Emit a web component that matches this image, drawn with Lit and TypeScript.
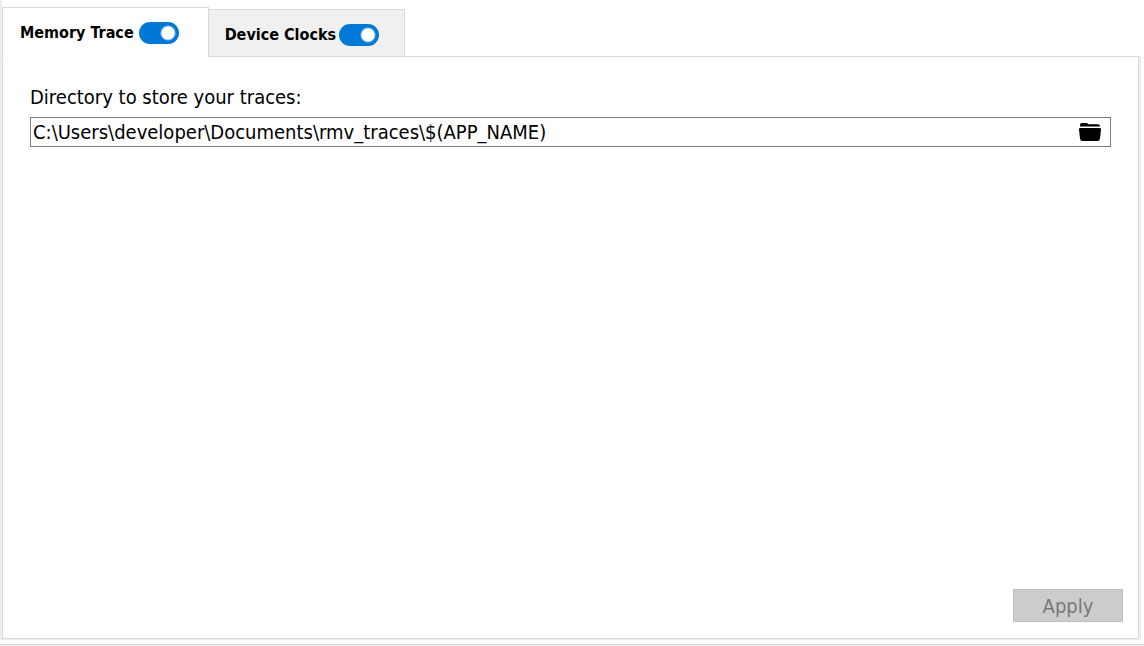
import { LitElement, html, css } from "lit";
import { customElement, property, state } from "lit/decorators.js";

@customElement("settings-tab")
class SettingsTab extends LitElement {
  static styles = css`
    :host {
      display: flex;
      box-sizing: border-box;
      align-items: center;
      height: 48px;
      padding: 4px 25px 0 16px;
      border: 1px solid #d9d9d9;
      border-left-width: 0;
      background: #f0f0f0;
      gap: 3px;
    }
    :host([active]) {
      height: 50px;
      padding: 2px 29px 0 17px;
      border-left-width: 1px;
      border-bottom-color: #fff;
      background: #fff;
      gap: 5px;
    }
    .title {
      padding: 0;
      border: 0;
      background: none;
      color: #000;
      font: bold 16px/22px "DejaVu Sans Condensed", "Noto Sans", sans-serif;
      white-space: nowrap;
      cursor: pointer;
    }
    .switch {
      appearance: none;
      box-sizing: border-box;
      width: 40px;
      height: 22px;
      margin: 0;
      border-radius: 11px;
      background: radial-gradient(circle at 11px 11px, #fff 6px, transparent 8px) #8a8a8a;
      cursor: pointer;
    }
    .switch:checked {
      background: radial-gradient(circle at 29px 11px, #fff 6px, transparent 8px) #0078d7;
    }
  `;
  @property() name = "";
  @property({ type: Boolean, reflect: true }) active = false;

  render() {
    return html`
      <button class="title" type="button" aria-pressed=${this.active}>${this.name}</button>
      <input class="switch" type="checkbox" role="switch" aria-label=${this.name} checked />
    `;
  }
}

@customElement("app-root")
class AppRoot extends LitElement {
  static styles = css`
    :host {
      display: flex;
      flex-direction: column;
      box-sizing: border-box;
      min-height: 100vh;
      background: #fff;
      color: #000;
      font: 20px/24px "DejaVu Sans Condensed", "Noto Sans", sans-serif;
    }
    .frame {
      display: flex;
      flex: 1;
      flex-direction: column;
      margin: 0 3px 4px 0;
      padding-top: 7px;
      border-left: 2px solid #eee;
      border-bottom: 1px solid #eee;
    }
    .tabs {
      display: flex;
      align-items: flex-end;
      margin-bottom: -1px;
      position: relative;
    }
    .panel {
      display: flex;
      flex: 1;
      flex-direction: column;
      margin-right: 2px;
      padding: 28px 27px 16px;
      border: 1px solid #d9d9d9;
      box-shadow: 2px 0 #eee;
    }
    .path {
      display: flex;
      align-items: center;
      margin-top: 8px;
      padding-right: 8px;
      border: 1px solid #7a7a7a;
    }
    .field {
      flex: 1;
      min-width: 0;
      height: 28px;
      box-sizing: border-box;
      padding: 0 2px;
      border: 0;
      outline: 0;
      background: none;
      color: inherit;
      font: inherit;
    }
    .browse {
      display: flex;
      padding: 0;
      border: 0;
      background: none;
      cursor: pointer;
    }
    .actions {
      display: flex;
      justify-content: flex-end;
      margin: auto -12px 0 0;
    }
    .apply {
      width: 110px;
      height: 33px;
      padding: 0;
      border: 1px solid #bfbfbf;
      background: #ccc;
      color: #787878;
      font: inherit;
    }
    .rule {
      height: 1px;
      border-top: 1px solid #d9d9d9;
      background: #eee;
    }
  `;
  @state() tab = "Memory Trace";

  private selectTab(name: string) {
    this.tab = name;
  }

  render() {
    return html`
      <div class="frame">
        <nav class="tabs">
          ${["Memory Trace", "Device Clocks"].map(
            (name) => html`<settings-tab
              .name=${name}
              ?active=${name === this.tab}
              @click=${() => this.selectTab(name)}
            ></settings-tab>`
          )}
        </nav>
        <main class="panel">
          <label for="dir">Directory to store your traces:</label>
          <div class="path">
            <input
              class="field"
              id="dir"
              type="text"
              spellcheck="false"
              value="C:\\Users\\developer\\Documents\\rmv_traces\\$(APP_NAME)"
            />
            <button class="browse" type="button" aria-label="Browse">
              <svg width="24" height="20" viewBox="0 0 24 20">
                <path d="M2 4.500V3Q2 1 4 1H8Q9.500 1 10.500 2.200H20Q22 2.200 22 4.500Z" />
                <path d="M2 6H22Q23.200 6 23 7.500L22 16.500Q21.800 19 19.500 19H4.500Q2.200 19 2 16.500L1 7.500Q.8 6 2 6Z" />
              </svg>
            </button>
          </div>
          <div class="actions"><button class="apply" type="button" disabled>Apply</button></div>
        </main>
      </div>
      <div class="rule"></div>
    `;
  }
}
